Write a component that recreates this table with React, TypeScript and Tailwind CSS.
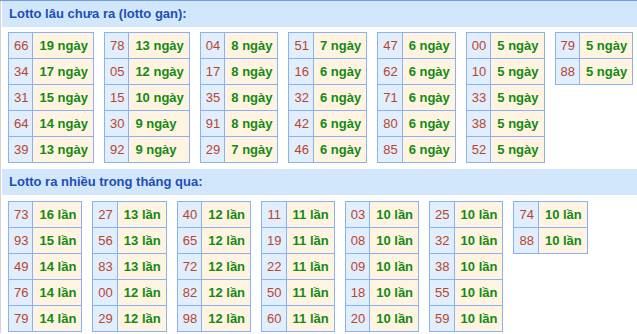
import React from "react";

type Row = [string, string];

const gan: Row[][] = [
  [["66", "19"], ["34", "17"], ["31", "15"], ["64", "14"], ["39", "13"]],
  [["78", "13"], ["05", "12"], ["15", "10"], ["30", "9"], ["92", "9"]],
  [["04", "8"], ["17", "8"], ["35", "8"], ["91", "8"], ["29", "7"]],
  [["51", "7"], ["16", "6"], ["32", "6"], ["42", "6"], ["46", "6"]],
  [["47", "6"], ["62", "6"], ["71", "6"], ["80", "6"], ["85", "6"]],
  [["00", "5"], ["10", "5"], ["33", "5"], ["38", "5"], ["52", "5"]],
  [["79", "5"], ["88", "5"]],
];

const nhieu: Row[][] = [
  [["73", "16"], ["93", "15"], ["49", "14"], ["76", "14"], ["79", "14"]],
  [["27", "13"], ["56", "13"], ["83", "13"], ["00", "12"], ["29", "12"]],
  [["40", "12"], ["65", "12"], ["72", "12"], ["82", "12"], ["98", "12"]],
  [["11", "11"], ["19", "11"], ["22", "11"], ["50", "11"], ["60", "11"]],
  [["03", "10"], ["08", "10"], ["09", "10"], ["18", "10"], ["20", "10"]],
  [["25", "10"], ["32", "10"], ["38", "10"], ["55", "10"], ["59", "10"]],
  [["74", "10"], ["88", "10"]],
];

function Group({ rows, unit }: { rows: Row[]; unit: string }) {
  return (
    <table className="border-collapse">
      <tbody>
        {rows.map(([n, v], i) => (
          <tr key={i} className="h-[26px]">
            <td className="border border-[#8ab2f2] bg-[#e1eefd] pl-[5px] pr-[4px] py-0 text-center text-[#b8452b] text-[13px] leading-[16px]">
              {n}
            </td>
            <td className="border border-[#8ab2f2] bg-[#fff4e2] pl-[6px] pr-[5px] py-0 text-[#138a13] font-bold text-[13px] leading-[16px] whitespace-nowrap">
              {v} {unit}
            </td>
          </tr>
        ))}
      </tbody>
    </table>
  );
}

function Header({ children }: { children: React.ReactNode }) {
  return (
    <div className="h-[26px] bg-[#d3e7fc] flex items-center pl-[7px] text-[13px] font-bold text-[#1b4fb6]">
      {children}
    </div>
  );
}

export default function App() {
  return (
    <div
      className="w-[637px] h-[334px] bg-white border-t border-[#6d9cdb] overflow-hidden"
      style={{ fontFamily: '"Liberation Sans", Arial, sans-serif' }}
    >
      <div className="border-l border-[#d4d4d4] pl-[1px] h-[332px]">
        <Header>Lotto lâu chưa ra (lotto gan):</Header>
        <div className="flex items-start gap-[10px] pl-[6px] pt-[5px]">
          {gan.map((g, i) => (
            <Group key={i} rows={g} unit="ngày" />
          ))}
        </div>
        <div className="mt-[6px]">
          <Header>Lotto ra nhiều trong tháng qua:</Header>
        </div>
        <div className="flex items-start gap-[10px] pl-[6px] pt-[6px]">
          {nhieu.map((g, i) => (
            <Group key={i} rows={g} unit="lần" />
          ))}
        </div>
      </div>
    </div>
  );
}
